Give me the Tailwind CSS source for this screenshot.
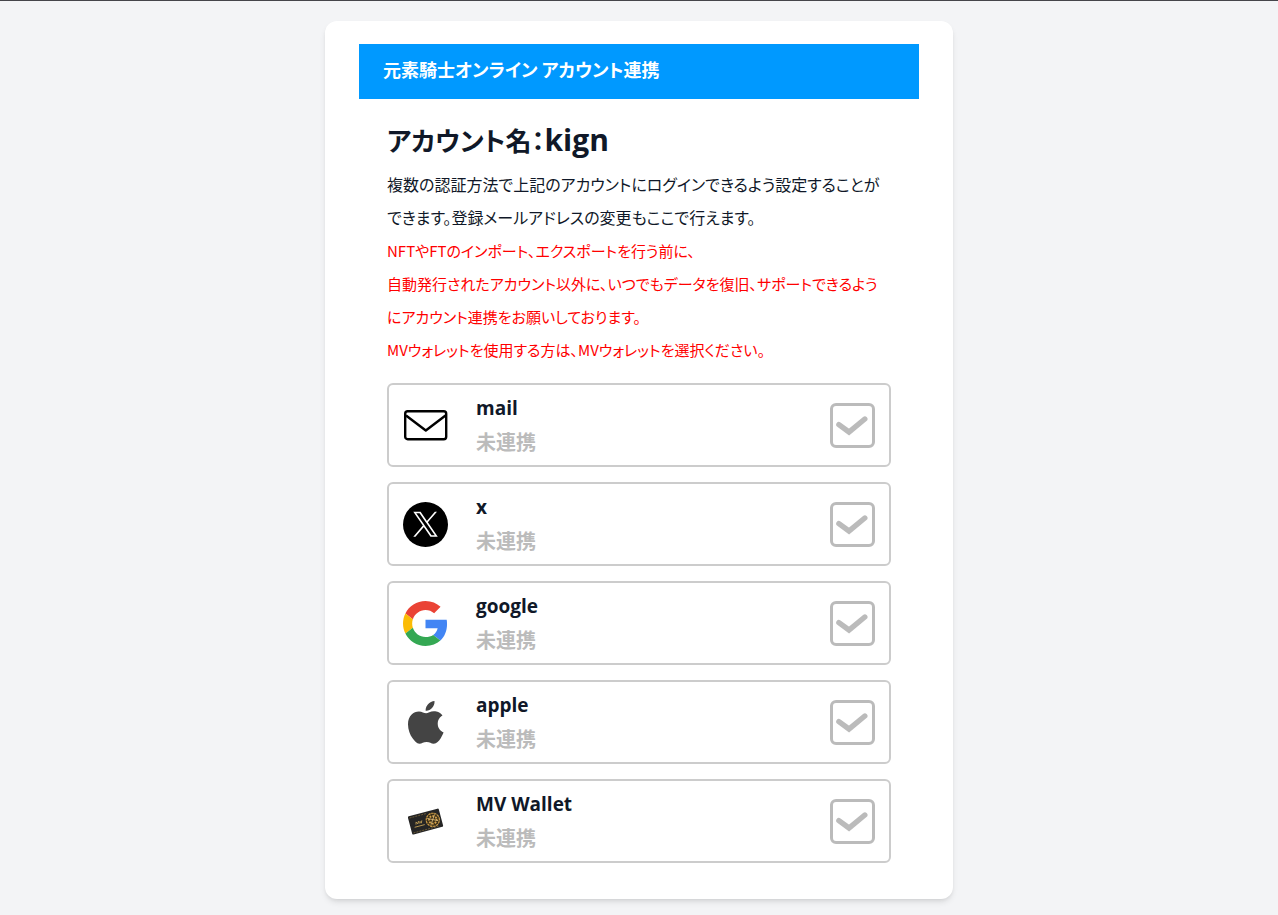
<!DOCTYPE html>
<html lang="ja">
<head>
<meta charset="utf-8">
<meta name="viewport" content="width=device-width, initial-scale=1">
<title>アカウント連携</title>
<script src="https://cdn.jsdelivr.net/npm/@tailwindcss/browser@4"></script>
</head>
<body class="min-h-screen border-t border-[#45454a] bg-gray-100 px-4 pt-5 pb-4 font-['Noto_Sans_CJK_JP',sans-serif] text-gray-900 [font-feature-settings:'palt']">
<main class="mx-auto max-w-[628px] rounded-xl bg-white px-[34px] pt-[23px] pb-9 shadow-md">
  <header class="bg-[#0099ff] px-6 pt-[9px] pb-[13px]">
    <p class="text-[18px] leading-[33px] font-bold text-white">元素騎士オンライン アカウント連携</p>
  </header>
  <div class="px-7">
    <h1 class="mt-[21px] mb-2 text-[26px] leading-10 font-bold">アカウント名：<span class="font-['Open_Sans',sans-serif] text-[30px]">kign</span></h1>
    <p class="text-[16px] leading-[33px]">複数の認証方法で上記のアカウントにログインできるよう設定することが<br>できます。登録メールアドレスの変更もここで行えます。</p>
    <p class="text-[15px] leading-[33px] text-[#ff0000]">NFTやFTのインポート、エクスポートを行う前に、<br>自動発行されたアカウント以外に、いつでもデータを復旧、サポートできるよう<br>にアカウント連携をお願いしております。<br>MVウォレットを使用する方は、MVウォレットを選択ください。</p>

    <ul class="mt-[17px] flex flex-col gap-[15px]">
      <li>
        <label class="flex items-center rounded-md border-2 border-[#cccccc] py-[7px] pr-[14px] pl-[14px]">
          <svg class="size-[45px] shrink-0" viewBox="0 0 45 45" fill="none" stroke="#000" stroke-width="2.4" stroke-linejoin="round" aria-hidden="true"><rect x="2.2" y="8.2" width="41" height="28" rx="2.5"/><path d="M3 12.5 22.8 27.5 42.5 12.5"/></svg>
          <span class="ml-7 grow leading-[33px] font-bold"><span class="block font-['Open_Sans',sans-serif] text-[19px]">mail</span><span class="block text-[20px] text-[#bbbbbb]">未連携</span></span>
          <span class="relative size-[45px] shrink-0"><input type="checkbox" checked class="block size-full appearance-none rounded-md border-3 border-[#bbbbbb]"><svg class="pointer-events-none absolute inset-0" viewBox="0 0 45 45" fill="none" stroke="#bbb" stroke-width="5.4" stroke-linecap="round" aria-hidden="true"><path d="M8.9 21.6 19 29 34.8 16"/></svg></span>
        </label>
      </li>
      <li>
        <label class="flex items-center rounded-md border-2 border-[#cccccc] py-[7px] pr-[14px] pl-[14px]">
          <svg class="size-[45px] shrink-0" viewBox="0 0 45 45" aria-hidden="true"><circle cx="22.5" cy="22.5" r="22.5" fill="#000"/><g transform="translate(10.3 9.7) scale(.0204)"><path fill="#fff" d="M714.163 519.284 1160.89 0H1055.03L667.137 450.887 357.328 0H0L468.492 681.821 0 1226.37H105.866L515.491 750.218 842.672 1226.37H1200L714.137 519.284H714.163ZM569.165 687.828 521.697 619.934 144.011 79.694H306.615L611.412 515.685 658.88 583.579 1055.08 1150.3H892.476L569.165 687.854V687.828Z"/></g></svg>
          <span class="ml-7 grow leading-[33px] font-bold"><span class="block font-['Open_Sans',sans-serif] text-[19px]">x</span><span class="block text-[20px] text-[#bbbbbb]">未連携</span></span>
          <span class="relative size-[45px] shrink-0"><input type="checkbox" checked class="block size-full appearance-none rounded-md border-3 border-[#bbbbbb]"><svg class="pointer-events-none absolute inset-0" viewBox="0 0 45 45" fill="none" stroke="#bbb" stroke-width="5.4" stroke-linecap="round" aria-hidden="true"><path d="M8.9 21.6 19 29 34.8 16"/></svg></span>
        </label>
      </li>
      <li>
        <label class="flex items-center rounded-md border-2 border-[#cccccc] py-[7px] pr-[14px] pl-[14px]">
          <svg class="size-[45px] shrink-0" viewBox="0.5 0 47 48" aria-hidden="true"><path fill="#EA4335" d="M24 9.5c3.54 0 6.71 1.22 9.21 3.6l6.85-6.85C35.9 2.38 30.47 0 24 0 14.62 0 6.51 5.38 2.56 13.22l7.98 6.19C12.43 13.72 17.74 9.5 24 9.5z"/><path fill="#4285F4" d="M46.98 24.55c0-1.57-.15-3.09-.38-4.55H24v9.02h12.94c-.58 2.96-2.26 5.48-4.78 7.18l7.73 6c4.51-4.18 7.09-10.36 7.09-17.65z"/><path fill="#FBBC05" d="M10.53 28.59c-.48-1.45-.76-2.99-.76-4.59s.27-3.14.76-4.59l-7.98-6.19C.92 16.46 0 20.12 0 24c0 3.88.92 7.54 2.56 10.78l7.97-6.19z"/><path fill="#34A853" d="M24 48c6.48 0 11.93-2.13 15.89-5.81l-7.73-6c-2.15 1.45-4.92 2.3-8.16 2.3-6.26 0-11.57-4.22-13.47-9.91l-7.98 6.19C6.51 42.62 14.62 48 24 48z"/></svg>
          <span class="ml-7 grow leading-[33px] font-bold"><span class="block font-['Open_Sans',sans-serif] text-[19px]">google</span><span class="block text-[20px] text-[#bbbbbb]">未連携</span></span>
          <span class="relative size-[45px] shrink-0"><input type="checkbox" checked class="block size-full appearance-none rounded-md border-3 border-[#bbbbbb]"><svg class="pointer-events-none absolute inset-0" viewBox="0 0 45 45" fill="none" stroke="#bbb" stroke-width="5.4" stroke-linecap="round" aria-hidden="true"><path d="M8.9 21.6 19 29 34.8 16"/></svg></span>
        </label>
      </li>
      <li>
        <label class="flex items-center rounded-md border-2 border-[#cccccc] py-[7px] pr-[14px] pl-[14px]">
          <svg class="size-[45px] shrink-0" viewBox="0 0 45 45" aria-hidden="true"><g transform="translate(5 1) scale(.0437 .0427)"><path fill="#444" d="M788.1 340.9c-5.8 4.5-108.2 62.2-108.2 190.5 0 148.4 130.3 200.9 134.2 202.2-.6 3.2-20.7 71.9-68.7 141.9-42.8 61.6-87.5 123.1-155.5 123.1s-85.5-39.5-164-39.5c-76.5 0-103.7 40.8-165.9 40.8s-105.6-57-155.5-127C46.7 790.7 0 663 0 541.8c0-194.4 126.4-297.5 250.8-297.5 66.1 0 121.2 43.4 162.7 43.4 39.5 0 101.1-46 176.3-46 28.5 0 130.9 2.6 198.3 99.2zm-234-181.5c31.1-36.9 53.1-88.1 53.1-139.3 0-7.1-.6-14.3-1.9-20.1-50.6 1.9-110.8 33.7-147.1 75.8-28.5 32.4-55.1 83.6-55.1 135.5 0 7.8 1.3 15.6 1.9 18.1 3.2.6 8.4 1.3 13.6 1.3 45.4 0 102.5-30.4 135.5-71.3z"/></g></svg>
          <span class="ml-7 grow leading-[33px] font-bold"><span class="block font-['Open_Sans',sans-serif] text-[19px]">apple</span><span class="block text-[20px] text-[#bbbbbb]">未連携</span></span>
          <span class="relative size-[45px] shrink-0"><input type="checkbox" checked class="block size-full appearance-none rounded-md border-3 border-[#bbbbbb]"><svg class="pointer-events-none absolute inset-0" viewBox="0 0 45 45" fill="none" stroke="#bbb" stroke-width="5.4" stroke-linecap="round" aria-hidden="true"><path d="M8.9 21.6 19 29 34.8 16"/></svg></span>
        </label>
      </li>
      <li>
        <label class="flex items-center rounded-md border-2 border-[#cccccc] py-[7px] pr-[14px] pl-[14px]">
          <svg class="size-[45px] shrink-0" viewBox="0 0 45 45" aria-hidden="true"><g transform="rotate(-15 22.5 22.5)"><rect x="6.5" y="13.2" width="32" height="18.8" rx="1.2" fill="#252525"/><path d="M8 15h18M8 30.4h27" stroke="#806a3c" stroke-width=".7" stroke-dasharray="2 1"/><circle cx="30" cy="22.8" r="7" fill="#3c3018"/><circle cx="30" cy="22.8" r="6.6" fill="none" stroke="#c99a48" stroke-width="1.2" stroke-dasharray="2.4 .7"/><circle cx="30" cy="22.8" r="3.8" fill="none" stroke="#d6a34c" stroke-width="1.8" stroke-dasharray="1.8 1.2"/><path d="M25 20l10 5M27 27l6-9" stroke="#d9b878" stroke-width=".8"/><path d="m12.5 23 .8-2.5 1.2 2.3 1.2-2.3.8 2.5M17 20.5l1 2.5 1.2-2.5M10.5 25.3h10.5" stroke="#c7a457" stroke-width=".8" fill="none"/></g></svg>
          <span class="ml-7 grow leading-[33px] font-bold"><span class="block font-['Open_Sans',sans-serif] text-[19px]">MV Wallet</span><span class="block text-[20px] text-[#bbbbbb]">未連携</span></span>
          <span class="relative size-[45px] shrink-0"><input type="checkbox" checked class="block size-full appearance-none rounded-md border-3 border-[#bbbbbb]"><svg class="pointer-events-none absolute inset-0" viewBox="0 0 45 45" fill="none" stroke="#bbb" stroke-width="5.4" stroke-linecap="round" aria-hidden="true"><path d="M8.9 21.6 19 29 34.8 16"/></svg></span>
        </label>
      </li>
    </ul>
  </div>
</main>
</body>
</html>
